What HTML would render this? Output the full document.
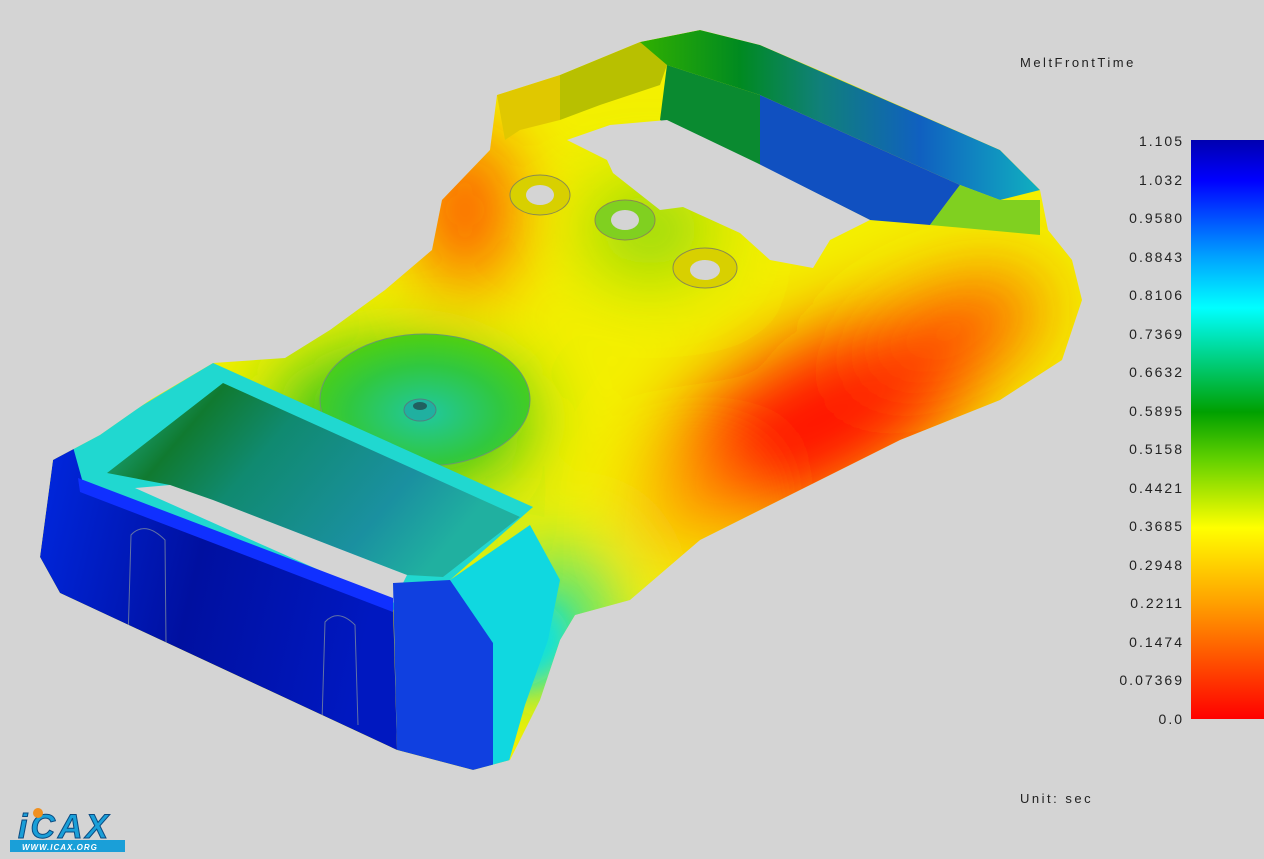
<!DOCTYPE html>
<html><head><style>
html,body{margin:0;padding:0;width:1264px;height:859px;overflow:hidden;background:#d4d4d4;}
.t{position:absolute;font-family:"Liberation Sans",sans-serif;font-size:13px;color:#222;letter-spacing:2.5px;}
.l{position:absolute;right:80px;font-family:"Liberation Sans",sans-serif;font-size:14px;color:#222;letter-spacing:2px;text-align:right;}
</style></head><body>
<svg width="1264" height="859" style="position:absolute;left:0;top:0">
<defs>
<linearGradient id="bar" x1="0" y1="0" x2="0" y2="1">
<stop offset="0" stop-color="#0000b0"/><stop offset="0.07" stop-color="#0000ff"/>
<stop offset="0.2" stop-color="#00a0ff"/><stop offset="0.29" stop-color="#00ffff"/>
<stop offset="0.47" stop-color="#00a000"/><stop offset="0.55" stop-color="#60d000"/>
<stop offset="0.67" stop-color="#ffff00"/><stop offset="0.8" stop-color="#ffa000"/>
<stop offset="0.88" stop-color="#ff6000"/><stop offset="1" stop-color="#ff0000"/>
</linearGradient>
<clipPath id="body"><path d="M40,557 L53,460 L100,435 L150,400 L213,363 L285,358 L330,330 L385,290 L432,250 L442,200 L490,150 L497,95 L560,75 L640,42 L700,30 L760,45 L830,75 L1000,150 L1040,190 L1048,230 L1072,260 L1082,300 L1062,360 L1000,400 L900,440 L800,490 L700,540 L630,600 L575,615 L560,640 L540,700 L510,760 L473,770 L397,750 L60,593 Z"/></clipPath>
<filter id="bl" x="-50%" y="-50%" width="200%" height="200%"><feGaussianBlur stdDeviation="40"/></filter>
<filter id="bl2" x="-50%" y="-50%" width="200%" height="200%"><feGaussianBlur stdDeviation="15"/></filter>
<linearGradient id="back" x1="0" y1="0" x2="1" y2="0">
<stop offset="0" stop-color="#30b000"/><stop offset="0.25" stop-color="#008a20"/><stop offset="0.45" stop-color="#10807a"/><stop offset="0.7" stop-color="#1060c0"/><stop offset="1" stop-color="#10b0c0"/>
</linearGradient>
<linearGradient id="front" x1="0" y1="0" x2="1" y2="0.2">
<stop offset="0" stop-color="#0028e0"/><stop offset="0.5" stop-color="#0010a0"/><stop offset="1" stop-color="#0018c0"/>
</linearGradient>
<linearGradient id="inner" x1="0" y1="0" x2="1" y2="0.4">
<stop offset="0" stop-color="#20c0b0"/><stop offset="0.25" stop-color="#107a30"/><stop offset="0.45" stop-color="#108a70"/><stop offset="0.8" stop-color="#1a90a0"/><stop offset="1" stop-color="#20b0a0"/>
</linearGradient>
<radialGradient id="disk" cx="0.5" cy="0.6" r="0.6">
<stop offset="0" stop-color="#20c8a0"/><stop offset="0.6" stop-color="#30c840"/><stop offset="1" stop-color="#50d010"/>
</radialGradient>
</defs>
<g clip-path="url(#body)">
<rect x="0" y="0" width="1264" height="859" fill="#f4f000"/>
<g filter="url(#bl)">
<ellipse cx="820" cy="420" rx="180" ry="75" transform="rotate(-28 820 420)" fill="#ff1000"/>
<ellipse cx="950" cy="330" rx="100" ry="40" transform="rotate(-20 950 330)" fill="#ff4000"/>
<ellipse cx="465" cy="210" rx="40" ry="80" fill="#ff3000"/>
<ellipse cx="400" cy="420" rx="130" ry="70" fill="#20c020"/>
<ellipse cx="560" cy="620" rx="50" ry="70" fill="#20e0a0"/>
<ellipse cx="690" cy="510" rx="50" ry="40" fill="#ffa000"/>
<ellipse cx="650" cy="230" rx="60" ry="40" fill="#70d010"/>
</g>
<path d="M640,42 L700,30 L760,45 L1000,150 L1040,190 L1000,200 L960,185 L760,95 L667,65 L640,60 Z" fill="url(#back)"/>
<path d="M560,75 L640,42 L667,65 L660,85 L600,105 L560,120 Z" fill="#b8c000"/>
<path d="M497,95 L560,75 L560,120 L520,130 L505,140 Z" fill="#e0c800"/>
<path d="M667,65 L760,95 L760,165 L660,120 Z" fill="#0a8a30"/>
<path d="M760,95 L960,185 L930,225 L870,220 L760,165 Z" fill="#1050c0"/>
<path d="M960,185 L1000,200 L1040,200 L1040,235 L930,225 Z" fill="#80d020"/>
<path d="M567,140 L610,125 L667,120 L757,163 L870,220 L830,240 L813,268 L770,260 L740,233 L683,207 L660,210 L613,173 L607,160 Z" fill="#d4d4d4"/>
<ellipse cx="540" cy="195" rx="30" ry="20" fill="#d8d000" stroke="#8a8a50"/>
<ellipse cx="540" cy="195" rx="14" ry="10" fill="#d4d4d4"/>
<ellipse cx="625" cy="220" rx="30" ry="20" fill="#80d020" stroke="#8a8a50"/>
<ellipse cx="625" cy="220" rx="14" ry="10" fill="#d4d4d4"/>
<ellipse cx="705" cy="268" rx="32" ry="20" fill="#d8d000" stroke="#8a8a50"/>
<ellipse cx="705" cy="270" rx="15" ry="10" fill="#d4d4d4"/>
<ellipse cx="425" cy="400" rx="105" ry="66" fill="url(#disk)" stroke="#6a9a6a"/>
<g filter="url(#bl2)"><ellipse cx="500" cy="640" rx="70" ry="50" fill="#10e0e0"/></g>
<path d="M73,447 L213,363 L533,507 L450,580 L393,610 L78,492 Z" fill="#20d8d0"/>
<path d="M107,473 L223,383 L520,517 L443,577 L407,575 L170,485 Z" fill="url(#inner)"/>
<path d="M135,488 L170,485 L213,500 L407,575 L393,603 Z" fill="#d4d4d4"/>
<ellipse cx="420" cy="410" rx="16" ry="11" fill="#20b0a0" stroke="#508080"/>
<ellipse cx="420" cy="406" rx="7" ry="4" fill="#206060"/>
<path d="M40,557 L53,460 L73,447 L83,483 L393,603 L397,750 L60,593 Z" fill="url(#front)"/>
<path d="M78,478 L393,598 L393,612 L80,492 Z" fill="#1030ff"/>
<path d="M450,580 L530,525 L560,580 L548,640 L525,705 L505,775 L485,775 L488,643 Z" fill="#10d8e0"/>
<path d="M393,583 L450,580 L493,643 L493,767 L473,770 L397,750 Z" fill="#1040e0"/>
<g stroke="#7a8aa0" stroke-width="1" fill="none" opacity="0.8">
<path d="M128,640 L131,535 Q145,520 165,540 L166,643"/>
<path d="M322,722 L325,622 Q338,608 355,625 L358,725"/>
</g>
</g>
<rect x="1191" y="140" width="73" height="579" fill="url(#bar)"/>
<g font-family="Liberation Sans,sans-serif" font-style="italic" font-weight="bold">
<text x="18" y="838" font-size="34" fill="#1a9fd8" stroke="#0a4a80" stroke-width="1" letter-spacing="3">iCAX</text>
<circle cx="38" cy="813" r="5" fill="#f09020"/>
<rect x="10" y="840" width="115" height="12" fill="#1a9fd8"/>
<text x="22" y="850" font-size="8" fill="#fff" letter-spacing="1">WWW.ICAX.ORG</text>
</g>
</svg>
<div class="t" style="left:1020px;top:55px;">MeltFrontTime</div>
<div class="t" style="left:1020px;top:791px;">Unit: sec</div>
<div class="l" style="top:133px">1.105</div>
<div class="l" style="top:172px">1.032</div>
<div class="l" style="top:210px">0.9580</div>
<div class="l" style="top:249px">0.8843</div>
<div class="l" style="top:287px">0.8106</div>
<div class="l" style="top:326px">0.7369</div>
<div class="l" style="top:364px">0.6632</div>
<div class="l" style="top:403px">0.5895</div>
<div class="l" style="top:441px">0.5158</div>
<div class="l" style="top:480px">0.4421</div>
<div class="l" style="top:518px">0.3685</div>
<div class="l" style="top:557px">0.2948</div>
<div class="l" style="top:595px">0.2211</div>
<div class="l" style="top:634px">0.1474</div>
<div class="l" style="top:672px">0.07369</div>
<div class="l" style="top:711px">0.0</div>
</body></html>
